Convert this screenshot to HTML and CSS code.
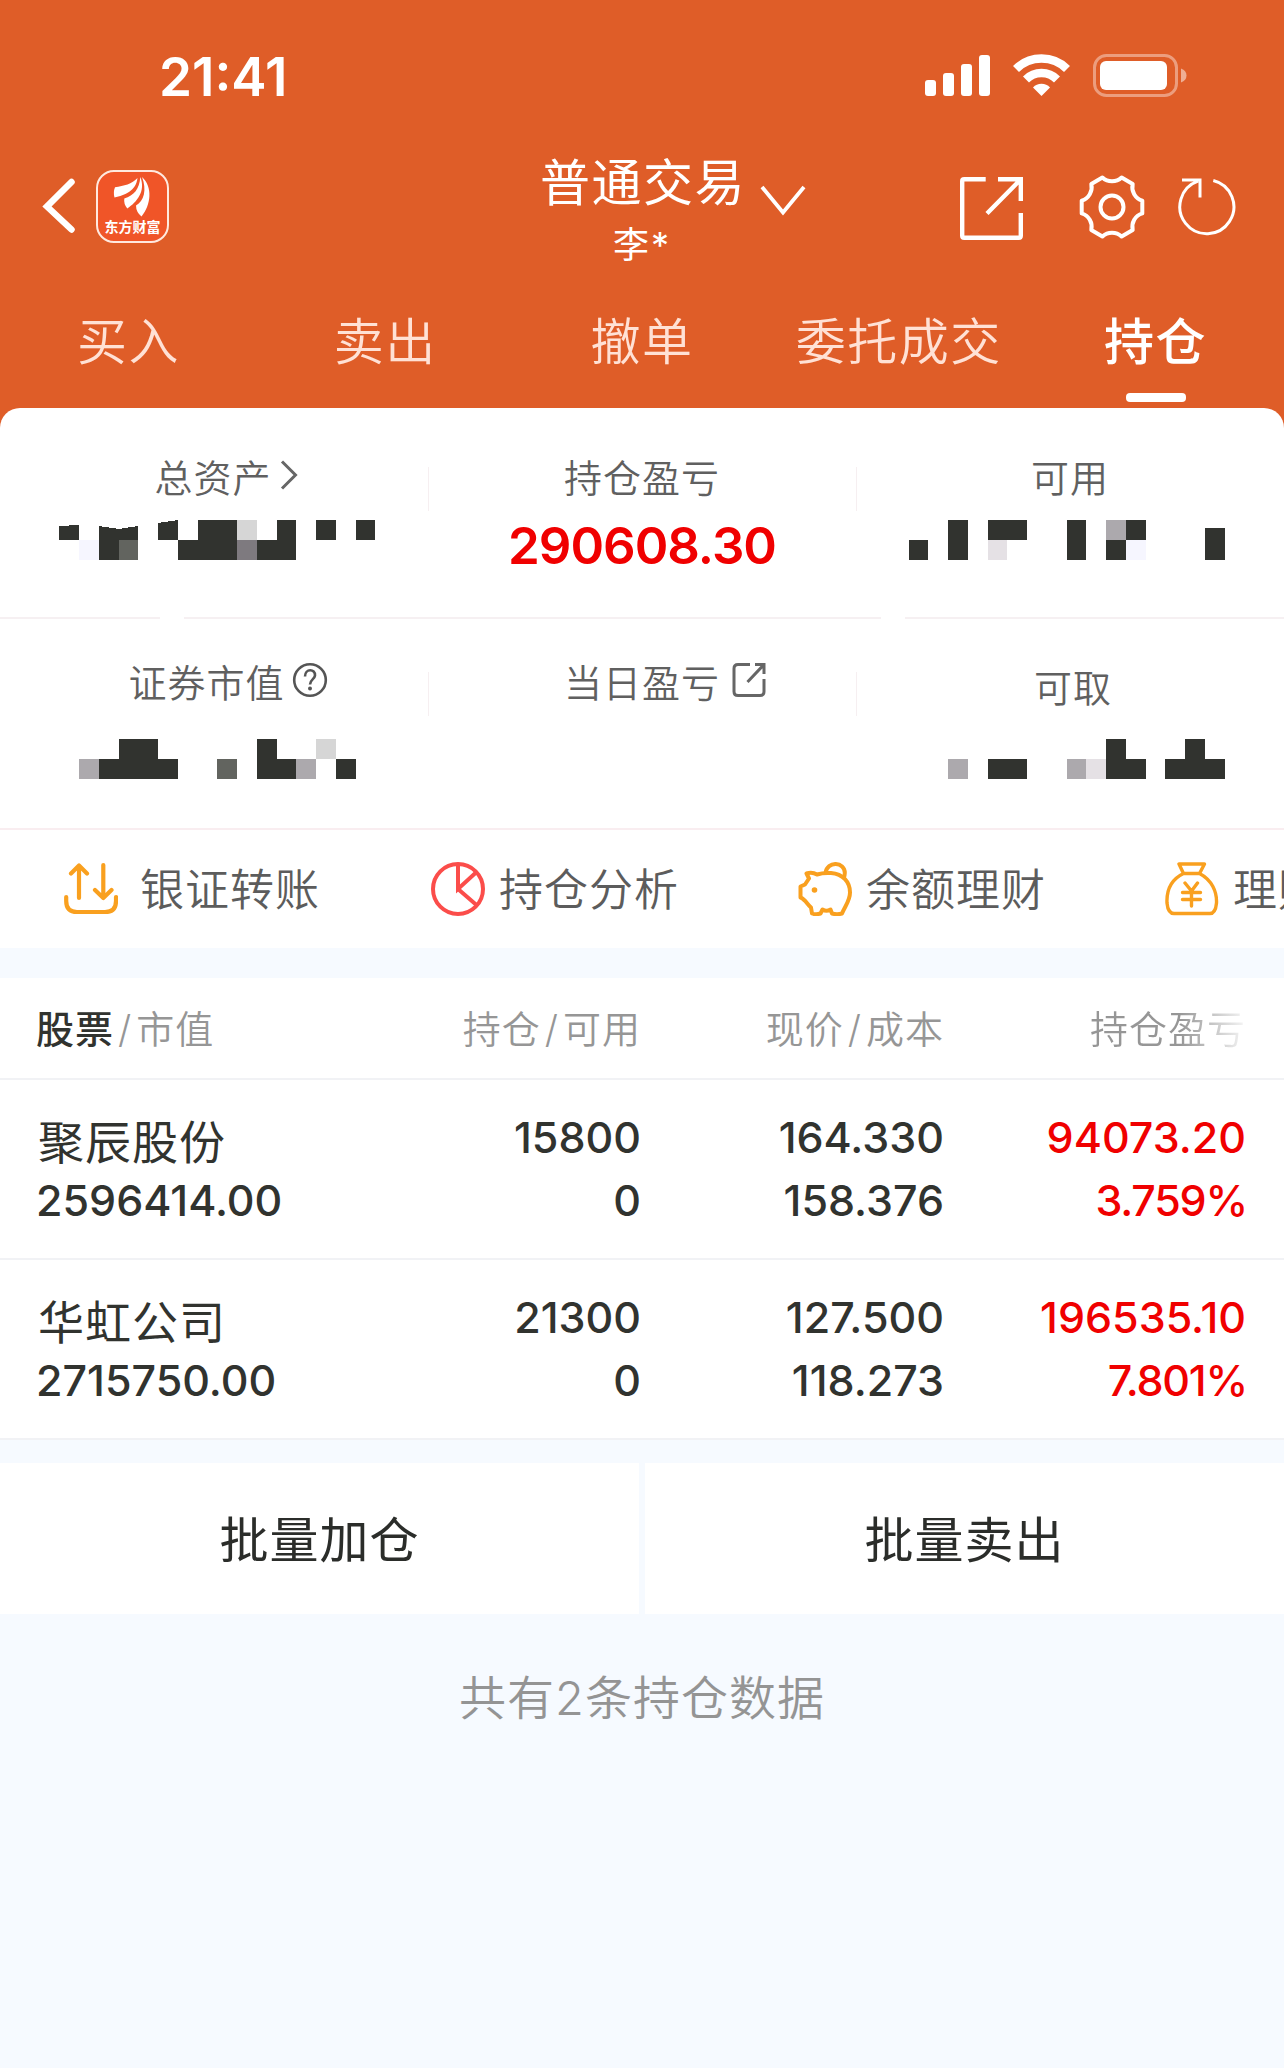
FILE: index.html
```html
<!DOCTYPE html>
<html lang="zh-CN">

<head>
    <meta charset="UTF-8">
    <title>普通交易</title>
    <link rel="stylesheet" href="styles.css">
</head>

<body>
    <header class="header">
        <div class="status-bar">
            <span class="time">21:41</span>
            <svg class="status-icons" width="264" height="46" viewBox="0 0 264 46">
                <g fill="#fff">
                    <rect x="1" y="28" width="11" height="16" rx="3" />
                    <rect x="19" y="21" width="11" height="23" rx="3" />
                    <rect x="37" y="12" width="11" height="32" rx="3" />
                    <rect x="55" y="3" width="11" height="41" rx="3" />
                    <path d="M109 35.500a11.500 11.500 0 0 1 17 0L117.500 44z" />
                    <rect x="176" y="9" width="67" height="29" rx="6" />
                </g>
                <path d="M92 17a36.500 36.500 0 0 1 51 0" fill="none" stroke="#fff" stroke-width="8.500" />
                <path d="M102 27.500a22 22 0 0 1 31 0" fill="none" stroke="#fff" stroke-width="8.500" />
                <rect x="170.500" y="3.500" width="82" height="40" rx="12" fill="none" stroke="#fff" stroke-opacity=".4" stroke-width="3" />
                <path d="M257 16.500q5.500 2 5.500 7t-5.500 7z" fill="#fff" fill-opacity=".5" />
            </svg>
        </div>

        <div class="nav">
            <div class="nav-left">
                <svg width="34" height="56" viewBox="0 0 34 56">
                    <path d="M30.500 4L6 28.500 30.500 51.500" fill="none" stroke="#fff" stroke-width="6.500" stroke-linecap="round" />
                </svg>
                <div class="logo">
                    <svg width="70" height="48" viewBox="1 1 70 48" fill="#fff">
                        <path d="M40.500 7C35 13 27 15 18 16.200Q16 21 17.500 26.500C28 24 39 20 40.500 7z" />
                        <path d="M43.300 6C42.500 18 37 24.500 27.300 27.500Q26.500 33 30.300 37.500C40 31 49 20 43.300 6z" />
                        <path d="M45 6C50 19 47 30 39 34.500Q39 41 44.500 45.500C54 34 56 16 45 6z" />
                    </svg>
                    <span>东方财富</span>
                </div>
            </div>
            <div class="nav-title">
                <div class="account">
                    <div class="account-type">普通交易</div>
                    <div class="account-name">李*</div>
                </div>
                <svg width="46" height="32" viewBox="0 0 46 32">
                    <path d="M2 2L23 27.500 44 2" fill="none" stroke="#fff" stroke-width="3.800" />
                </svg>
            </div>
            <div class="nav-right">
                <svg class="share" width="64" height="64" viewBox="0 0 64 64" fill="none" stroke="#fff" stroke-width="4.400">
                    <path d="M25.700 2.200H4.200Q2.200 2.200 2.200 4.200V58.800Q2.200 60.800 4.200 60.800H58.800Q60.800 60.800 60.800 58.800V36M38 2.200H60.800V24M27 36.500L60 3" />
                </svg>
                <svg class="gear" width="68" height="64" viewBox="0 0 68 64" fill="none" stroke="#fff" stroke-width="4" stroke-linejoin="round">
                    <path d="M64.300 38.400A14 14 0 0 0 54.700 55L43.600 61.500A14 14 0 0 0 24.400 61.500L13.300 55A14 14 0 0 0 3.700 38.400V25.600A14 14 0 0 0 13.300 9L24.400 2.500A14 14 0 0 0 43.600 2.500L54.700 9A14 14 0 0 0 64.300 25.600z" />
                    <circle cx="34" cy="32" r="11.500" />
                </svg>
                <svg width="60" height="60" viewBox="0 0 60 60" fill="none" stroke="#fff" stroke-width="3">
                    <path d="M35.300 3.500A27 27 0 1 1 20 4.200M4 3H22V20.500" />
                </svg>
            </div>
        </div>

        <nav class="tabs">
            <a class="tab">买入</a>
            <a class="tab">卖出</a>
            <a class="tab">撤单</a>
            <a class="tab">委托成交</a>
            <a class="tab active">持仓</a>
        </nav>
    </header>

    <section class="assets">
        <div class="asset-row first">
            <div class="asset">
                <div class="asset-label total">总资产
                    <svg width="18" height="30" viewBox="0 0 18 30"><path d="M2 1.500L15.500 15 2 28.500" fill="none" stroke="#666" stroke-width="3" /></svg>
                </div>
                <svg class="mosaic" width="428" height="40" viewBox="0 0 428 40" fill="#31332f" shape-rendering="crispEdges">
                    <path d="M59 6L79 5V20H59zM99 6L119 9 138 6V20H119V40H99zM158 3L178 0V20H158zM198 0H237V40H178V20H198zM277 0H296V40H257V20H277zM316 0H336V20H316zM356 0H375V20H356z" />
                    <path d="M79 20H99V40H79z" fill="#f6f6ff" />
                    <path d="M119 20H138V40H119z" fill="#62645f" />
                    <path d="M237 0H257V20H237z" fill="#d6d6d6" />
                    <path d="M237 20H257V40H237z" fill="#7e7a7f" />
                </svg>
            </div>
            <div class="asset">
                <div class="asset-label">持仓盈亏</div>
                <div class="asset-value">290608.30</div>
            </div>
            <div class="asset">
                <div class="asset-label">可用</div>
                <svg class="mosaic" width="428" height="40" viewBox="856 0 428 40" fill="#31332f" shape-rendering="crispEdges">
                    <path d="M909 20H928V40H909zM948 0H968V40H948zM988 0H1027V20H988zM1067 0H1086V40H1067zM1126 0H1146V20H1126V40H1106V20H1126zM1205 8H1225V40H1205z" />
                    <path d="M988 20H1007V40H988z" fill="#e5e1e5" />
                    <path d="M1106 0H1126V20H1106z" fill="#aca9ad" />
                    <path d="M1126 20H1146V40H1126z" fill="#f6f6ff" />
                </svg>
            </div>
        </div>
        <div class="row-line"><i></i><i></i><i></i></div>
        <div class="asset-row second">
            <div class="asset">
                <div class="asset-label market">证券市值
                    <svg width="36" height="36" viewBox="0 0 36 36" fill="none" stroke="#555" stroke-width="2.600">
                        <circle cx="18" cy="18" r="15.800" />
                        <path d="M13 14.500C13 6 23.500 6.500 23 13.500 22.500 17.500 18 17.500 18 22.500" />
                        <circle cx="18" cy="26.500" r="2" fill="#555" stroke="none" />
                    </svg>
                </div>
                <svg class="mosaic" width="428" height="40" viewBox="0 0 428 40" fill="#31332f" shape-rendering="crispEdges">
                    <path d="M119 0H158V20H178V40H99V20H119zM257 0H277V20H296V40H257zM336 20H356V40H336z" />
                    <path d="M79 20H99V40H79zM296 20H316V40H296z" fill="#aca9ad" />
                    <path d="M217 20H237V40H217z" fill="#62645f" />
                    <path d="M316 0H336V20H316z" fill="#d6d6d6" />
                </svg>
            </div>
            <div class="asset">
                <div class="asset-label daily">当日盈亏
                    <svg width="34" height="36" viewBox="0 0 34 36" fill="none" stroke="#666" stroke-width="3">
                        <path d="M18 2.500H6Q2 2.500 2 6.500V29.500Q2 33.500 6 33.500H28Q32 33.500 32 29.500V17M23 2.500H32V12M15.500 20L31 3.500" />
                    </svg>
                </div>
            </div>
            <div class="asset">
                <div class="asset-label drawable">可取</div>
                <svg class="mosaic" width="428" height="40" viewBox="856 0 428 40" fill="#31332f" shape-rendering="crispEdges">
                    <path d="M988 20H1027V40H988zM1106 0H1126V20H1146V40H1106zM1185 0H1205V20H1225V40H1165V20H1185z" />
                    <path d="M948 20H968V40H948zM1067 20H1086V40H1067z" fill="#aca9ad" />
                    <path d="M1086 20H1106V40H1086z" fill="#e5e1e5" />
                </svg>
            </div>
        </div>
        <div class="shortcuts">
            <a class="shortcut">
                <svg width="54" height="54" viewBox="0 -1 54 54" fill="none" stroke="#f9a01f" stroke-width="4.200" stroke-linecap="round" stroke-linejoin="round">
                    <path d="M2.200 34V38Q2.200 49 13 49H41Q52 49 52 38V34M15 35V3M7 10.500L15 2.500 23 10.500M39.300 2V34M31 27L39.300 35 47.500 27" />
                </svg>
                <span class="wide">银证转账</span>
            </a>
            <a class="shortcut">
                <svg width="54" height="54" viewBox="0 0 54 54" fill="none" stroke="#fb4d4a" stroke-width="4">
                    <circle cx="27" cy="27" r="25" />
                    <path d="M27 2V27L45 10.500M27 27L45.500 43" />
                </svg>
                <span>持仓分析</span>
            </a>
            <a class="shortcut">
                <svg width="54" height="54" viewBox="0 0 54 54" fill="none" stroke="#f9a01f" stroke-width="4" stroke-linejoin="round">
                    <path d="M27.500 11C29 -1.500 47 -.5 46.800 11Q46.800 14 45.500 17" />
                    <path d="M8.500 11.500Q14 9.500 19 12.500 25 10.500 33 11C45 12 52 20 52 30.500 52 39 47 44 44 51.500Q39 53 34 51.500L32.500 47.500Q28.500 50 24.500 47.500L22.500 51.500Q18 53 14 51.500L13 45.500C9 42 7 37 2.500 35.500V24.500L7 22.500 11 16.500z" />
                    <circle cx="16.500" cy="28" r="2.800" fill="#f9a01f" stroke="none" />
                </svg>
                <span>余额理财</span>
            </a>
            <a class="shortcut">
                <svg width="54" height="54" viewBox="0 0 54 54" fill="none" stroke="#f9a01f" stroke-width="3.400" stroke-linejoin="round" stroke-linecap="round">
                    <path d="M14 2H39.500L34.500 11.500H18.500zM18.500 11.500C5 18 1.500 30 2 41Q3 51.500 9 51.500H45Q50.500 51.500 51.500 41C52 30 47 18 34.500 11.500M20 21L26.500 29 32.500 21M17.500 30.500H35.500M17.500 37.500H35.500M26.500 29V44" />
                </svg>
                <span>理财</span>
            </a>
        </div>
    </section>

    <section class="positions">
        <div class="position-head">
            <div><b>股票</b><em>/</em>市值</div>
            <div>持仓<em>/</em>可用</div>
            <div>现价<em>/</em>成本</div>
            <div class="fade">持仓盈亏</div>
        </div>
        <div class="position">
            <div><span class="name">聚辰股份</span><span>2596414.00</span></div>
            <div><span>15800</span><span>0</span></div>
            <div><span>164.330</span><span>158.376</span></div>
            <div class="up"><span>94073.20</span><span class="rate">3.759%</span></div>
        </div>
        <div class="position">
            <div><span class="name">华虹公司</span><span>2715750.00</span></div>
            <div><span>21300</span><span>0</span></div>
            <div><span>127.500</span><span>118.273</span></div>
            <div class="up"><span>196535.10</span><span class="rate">7.801%</span></div>
        </div>
    </section>

    <div class="batch">
        <button>批量加仓</button>
        <button>批量卖出</button>
    </div>
    <p class="summary">共有2条持仓数据</p>
</body>

</html>
```

FILE: styles.css
```css
* {
    box-sizing: border-box;
}

body {
    margin: 0;
    width: 1284px;
    min-height: 2068px;
    overflow-x: hidden;
    background: #f6faff;
    font-family: Inter, "Noto Sans CJK SC", sans-serif;
    color: #31332f;
}

svg {
    display: block;
    flex: none;
}

/* Header */
.header {
    height: 428px;
    background: #df5d28;
    color: #fff;
}

.status-bar {
    display: flex;
    justify-content: space-between;
    height: 130px;
    padding: 52px 96px 0 159px;
}

.time {
    font-size: 53px;
    font-weight: 600;
    line-height: 50px;
}

.nav {
    display: grid;
    grid-template-columns: 400px 1fr 400px;
    height: 152px;
}

.nav-left {
    display: flex;
    align-items: center;
    gap: 21px;
    padding-left: 41px;
    height: 152px;
}

.logo {
    width: 73px;
    height: 73px;
    border: 2px solid #ffe9df;
    border-radius: 18px;
    background: #f05528;
}

.logo span {
    display: block;
    font-size: 14px;
    font-weight: 700;
    line-height: 14px;
    text-align: center;
    white-space: nowrap;
}

.nav-title {
    display: flex;
    padding: 25px 0 0 140px;
}

.account {
    width: 201px;
    text-align: center;
}

.account-type {
    font-size: 50px;
    line-height: 56px;
    letter-spacing: 1.500px;
    white-space: nowrap;
}

.account-name {
    padding: 12px 0 0 3px;
    font-size: 36px;
    line-height: 44px;
    letter-spacing: 2px;
}

.nav-title > svg {
    margin: 30px 0 0 19px;
}

.nav-right {
    display: flex;
    align-items: center;
    height: 154px;
    padding-left: 76px;
}

.share {
    margin-top: 3px;
}

.gear {
    margin: 0 32px 0 54px;
}

.tabs {
    display: grid;
    grid-template-columns: repeat(5, 1fr);
    height: 126px;
}

.tab {
    display: flex;
    flex-direction: column;
    align-items: center;
    padding-top: 30px;
    font-size: 50px;
    font-weight: 350;
    line-height: 60px;
    letter-spacing: 1.500px;
    color: #ffe1d5;
}

.tab.active {
    font-weight: 500;
    color: #fff;
}

.tab.active::after {
    content: "";
    width: 60px;
    height: 9px;
    margin-top: 21px;
    border-radius: 4px;
    background: #fff;
}

/* Asset overview */
.assets {
    height: 540px;
    margin-top: -20px;
    overflow: hidden;
    border-radius: 20px 20px 0 0;
    background: #fff;
}

.asset-row {
    display: grid;
    grid-template-columns: repeat(3, 428px);
}

.asset-row.first {
    height: 209px;
    padding-top: 43px;
}

.asset-row.second {
    height: 212px;
    padding-top: 38px;
    border-bottom: 2px solid #f9edf0;
}

.asset {
    display: flex;
    flex-direction: column;
    align-items: center;
}

/* short divider between the columns */
.asset + .asset {
    background: linear-gradient(#f6eff1, #f6eff1) 0 16px / 1px 44px no-repeat;
}

.asset-label {
    display: flex;
    align-items: center;
    height: 48px;
    font-size: 38px;
    font-weight: 350;
    letter-spacing: 1px;
    color: #606060;
    white-space: nowrap;
}

.asset-label.total {
    gap: 8px;
    padding-left: 24px;
}

.asset-label.market {
    gap: 7px;
    padding-left: 28px;
}

.asset-label.daily {
    gap: 12px;
    padding-left: 46px;
}

.asset-label.drawable {
    padding: 10px 0 0 6px;
}

.asset-value {
    margin-top: 16px;
    font-size: 51px;
    font-weight: 600;
    line-height: 62px;
    letter-spacing: -1px;
    color: #f00000;
}

.first .mosaic {
    margin-top: 21px;
}

.second .mosaic {
    margin-top: 35px;
}

.row-line {
    display: grid;
    grid-template-columns: 184px 721px 379px;
    height: 1px;
}

.row-line i {
    height: 2px;
    margin-right: 24px;
    background: #f6f0f2;
}

.row-line i:last-child {
    margin-right: 0;
}

.shortcuts {
    display: flex;
    height: 118px;
    padding-left: 64px;
    overflow: hidden;
}

.shortcut {
    display: flex;
    flex: none;
    align-items: center;
    width: 367px;
    gap: 14px;
    font-size: 44px;
    font-weight: 350;
    letter-spacing: 1px;
    color: #5c5c5c;
    white-space: nowrap;
}

.shortcut span {
    padding-bottom: 4px;
}

.shortcut .wide {
    padding-left: 8px;
}

/* Positions table */
.positions {
    margin-top: 30px;
    background: #fff;
}

.position-head,
.position {
    display: grid;
    grid-template-columns: 340px 265px 303px 302px;
    padding-left: 36px;
    border-bottom: 2px solid #f1f2f5;
}

.position-head {
    height: 102px;
    font-size: 38px;
    font-weight: 350;
    line-height: 103px;
    letter-spacing: 1px;
    color: #969696;
    text-align: right;
    white-space: nowrap;
}

.position-head div:first-child,
.position div:first-child {
    text-align: left;
}

.position-head b {
    font-weight: 500;
    color: #31332f;
}

.position-head em {
    padding: 0 4px;
    font-style: normal;
}

.position-head .fade {
    color: transparent;
    background: linear-gradient(90deg, #969696 0 78%, #fff 102%);
    background-clip: text;
    -webkit-background-clip: text;
}

.position {
    height: 180px;
    padding-top: 26px;
    font-size: 43px;
    font-weight: 500;
    text-align: right;
}

.position span {
    display: block;
    line-height: 63px;
}

.position .name {
    font-size: 46px;
    font-weight: 400;
    letter-spacing: 1px;
    padding: 5px 0 0 2px;
    height: 63px;
}

.position .up {
    color: #f00000;
}

.position .rate {
    margin-right: -1px;
    letter-spacing: -1.200px;
}

/* Batch actions */
.batch {
    display: grid;
    grid-template-columns: 639px 639px;
    gap: 6px;
    height: 151px;
    margin-top: 23px;
}

.batch button {
    padding: 0 0 4px;
    border: none;
    background: #fff;
    font-family: inherit;
    font-size: 49px;
    font-weight: 400;
    letter-spacing: 1px;
    color: #2b2d2a;
}

.summary {
    margin: 56px 0 0;
    font-size: 47px;
    font-weight: 350;
    line-height: 56px;
    letter-spacing: 1px;
    text-align: center;
    color: #949494;
}
```
